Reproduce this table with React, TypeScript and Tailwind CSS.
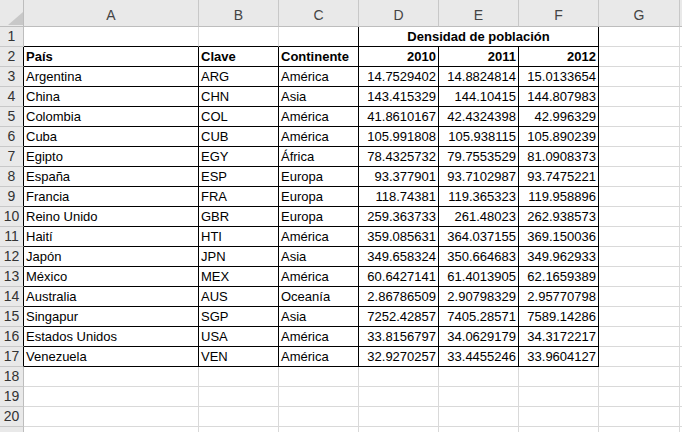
import React from "react";

const data: string[][] = [
  ["Argentina", "ARG", "América", "14.7529402", "14.8824814", "15.0133654"],
  ["China", "CHN", "Asia", "143.415329", "144.10415", "144.807983"],
  ["Colombia", "COL", "América", "41.8610167", "42.4324398", "42.996329"],
  ["Cuba", "CUB", "América", "105.991808", "105.938115", "105.890239"],
  ["Egipto", "EGY", "África", "78.4325732", "79.7553529", "81.0908373"],
  ["España", "ESP", "Europa", "93.377901", "93.7102987", "93.7475221"],
  ["Francia", "FRA", "Europa", "118.74381", "119.365323", "119.958896"],
  ["Reino Unido", "GBR", "Europa", "259.363733", "261.48023", "262.938573"],
  ["Haití", "HTI", "América", "359.085631", "364.037155", "369.150036"],
  ["Japón", "JPN", "Asia", "349.658324", "350.664683", "349.962933"],
  ["México", "MEX", "América", "60.6427141", "61.4013905", "62.1659389"],
  ["Australia", "AUS", "Oceanía", "2.86786509", "2.90798329", "2.95770798"],
  ["Singapur", "SGP", "Asia", "7252.42857", "7405.28571", "7589.14286"],
  ["Estados Unidos", "USA", "América", "33.8156797", "34.0629179", "34.3172217"],
  ["Venezuela", "VEN", "América", "32.9270257", "33.4455246", "33.9604127"],
];

const header = ["País", "Clave", "Continente", "2010", "2011", "2012"];

function isB(r: number, c: number) {
  if (r >= 2 && r <= 17 && c >= 1 && c <= 6) return true;
  if (r === 1 && c >= 4 && c <= 6) return true;
  return false;
}

function cellText(r: number, c: number): string {
  if (r === 2 && c >= 1 && c <= 6) return header[c - 1];
  if (r >= 3 && r <= 17 && c >= 1 && c <= 6) return data[r - 3][c - 1];
  return "";
}

function Cell({ r, c }: { r: number; c: number }) {
  const right = isB(r, c) || isB(r, c + 1);
  const bottom = isB(r, c) || isB(r + 1, c);
  const text = cellText(r, c);
  const num = c >= 4 && c <= 6;
  const bold = r === 2;
  return (
    <div
      className={
        "h-[20px] border-r border-b overflow-hidden whitespace-nowrap leading-[17px] pt-[1px] px-[2px] " +
        (right ? "border-r-black " : "border-r-[#d9d9d9] ") +
        (bottom ? "border-b-black " : "border-b-[#d9d9d9] ") +
        (num ? "text-right " : "text-left ") +
        (bold ? "font-bold" : "font-normal")
      }
    >
      {text}
    </div>
  );
}

export default function App() {
  const rows = Array.from({ length: 21 }, (_, i) => i + 1);
  const cols = ["A", "B", "C", "D", "E", "F", "G", ""];
  return (
    <div
      className="w-[682px] h-[432px] overflow-hidden bg-white text-[13px] text-black"
      style={{ fontFamily: '"Liberation Sans", Arial, sans-serif' }}
    >
      <div className="grid grid-cols-[24px_175px_80px_80px_80px_80px_80px_81px_1fr]">
        {/* corner */}
        <div className="relative h-[27px] bg-[#e9e9e9] border-r border-b border-r-[#bdbdbd] border-b-[#bdbdbd]">
          <svg className="absolute left-[8px] top-[12px]" width="15" height="13" viewBox="0 0 15 13">
            <polygon points="15,0 15,13 0,13" fill="#c8c8c8" />
          </svg>
        </div>
        {cols.map((c, i) => (
          <div
            key={"h" + i}
            className="h-[27px] bg-[#e9e9e9] border-r border-b border-r-[#c8c8c8] border-b-[#bdbdbd] text-center text-[#444] text-[14px] leading-[17px] pt-[7px]"
          >
            {c}
          </div>
        ))}
        {rows.map((r) => (
          <React.Fragment key={r}>
            <div
              className={
                "h-[20px] bg-[#e9e9e9] border-r border-b border-b-[#c8c8c8] text-center text-[#333] text-[14px] leading-[17px] pt-[1px] " +
                (r >= 2 && r <= 17 ? "border-r-black" : "border-r-[#bdbdbd]")
              }
            >
              {r <= 20 ? r : ""}
            </div>
            {r === 1 ? (
              <>
                <Cell r={1} c={1} />
                <Cell r={1} c={2} />
                <Cell r={1} c={3} />
                <div className="col-span-3 h-[20px] border-r border-b border-r-black border-b-black text-center font-bold leading-[17px] pt-[1px] whitespace-nowrap">
                  Densidad de población
                </div>
                <Cell r={1} c={7} />
                <Cell r={1} c={8} />
              </>
            ) : (
              [1, 2, 3, 4, 5, 6, 7, 8].map((c) => <Cell key={c} r={r} c={c} />)
            )}
          </React.Fragment>
        ))}
      </div>
    </div>
  );
}
